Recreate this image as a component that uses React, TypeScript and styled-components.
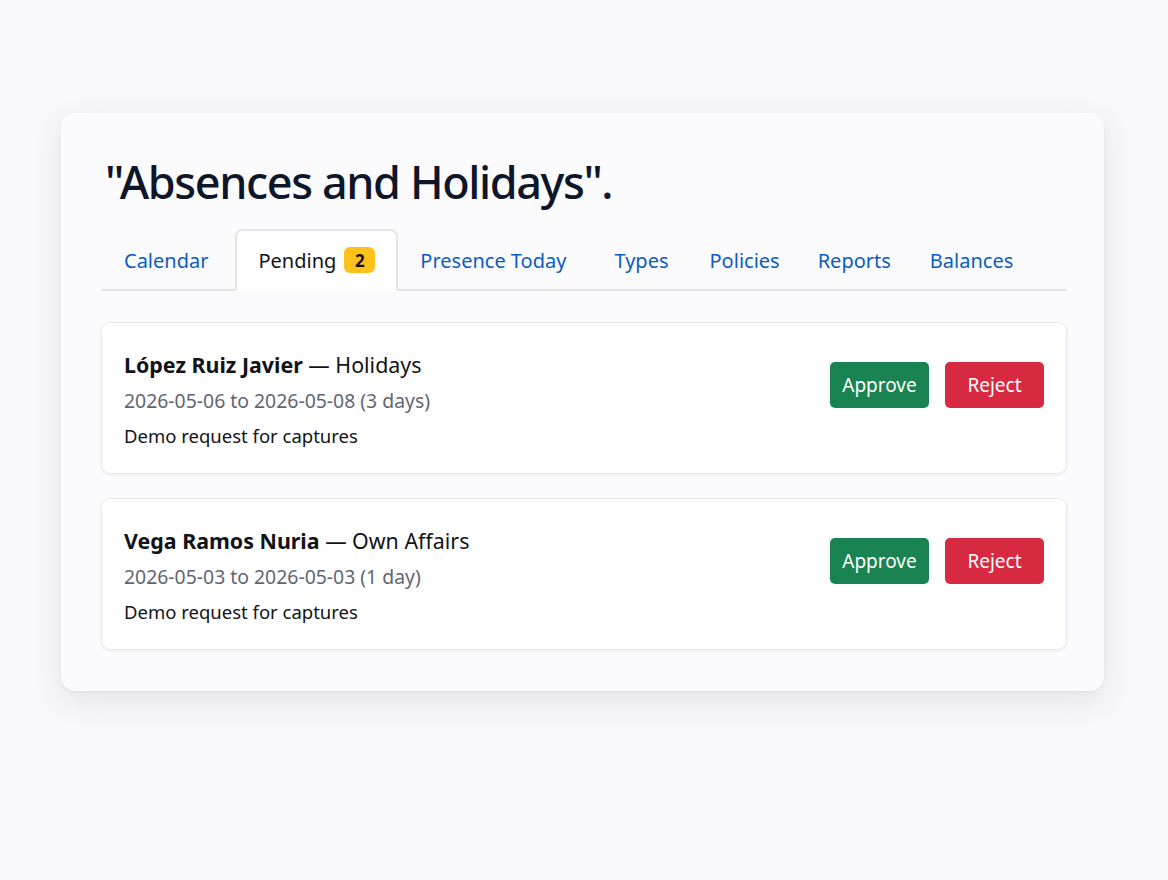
import styled, { createGlobalStyle } from "styled-components";

const GlobalStyle = createGlobalStyle`
  html, body {
    margin: 0;
    padding: 0;
    background: #f8f8fb;
  }
  body {
    font-family: "Noto Sans", "Open Sans", sans-serif;
    color: #111;
  }
`;

const colors = {
  title: "#0f1629",
  link: "#0b5cc2",
  text: "#111318",
  muted: "#5f6673",
  border: "#e3e5ea",
  success: "#198452",
  danger: "#d72a40",
  badge: "#fcc11a",
};

const Page = styled.div`
  width: 1168px;
  height: 880px;
  box-sizing: border-box;
  padding: 113px 64px 0 61px;
`;

const Panel = styled.section`
  width: 1043px;
  box-sizing: border-box;
  background: #fbfbfd;
  border-radius: 14px;
  box-shadow: 0 10px 30px rgba(20, 24, 40, 0.09), 0 1px 3px rgba(20, 24, 40, 0.05);
  padding: 38px 37px 41px 40px;
`;

const Title = styled.h1`
  margin: 0 0 16px 4px;
  font-size: 45px;
  line-height: 62px;
  font-weight: 500;
  color: ${colors.title};
  letter-spacing: -1.4px;
`;

const TabBar = styled.nav`
  display: flex;
  align-items: flex-end;
  border-bottom: 2px solid ${colors.border};
  margin-bottom: 31px;
`;

const Tab = styled.div<{ $active?: boolean; $gap: number }>`
  display: flex;
  flex-shrink: 0;
  align-items: center;
  gap: 8px;
  height: 62px;
  box-sizing: border-box;
  padding: 0 21px;
  margin-right: ${(p) => p.$gap}px;
  margin-bottom: -2px;
  font-size: 20px;
  white-space: nowrap;
  color: ${(p) => (p.$active ? colors.text : colors.link)};
  background: ${(p) => (p.$active ? "#ffffff" : "transparent")};
  border: 2px solid ${(p) => (p.$active ? colors.border : "transparent")};
  border-bottom-color: ${(p) => (p.$active ? "#ffffff" : "transparent")};
  border-radius: 8px 8px 0 0;
`;

const Badge = styled.span`
  display: inline-flex;
  align-items: center;
  justify-content: center;
  min-width: 31px;
  height: 26px;
  padding: 0 6px;
  box-sizing: border-box;
  border-radius: 6px;
  background: ${colors.badge};
  color: #111;
  font-size: 17px;
  font-weight: 700;
`;

const RequestList = styled.div`
  display: flex;
  flex-direction: column;
  gap: 24px;
`;

const RequestCard = styled.article`
  display: flex;
  align-items: flex-start;
  justify-content: space-between;
  background: #ffffff;
  border: 1px solid #e8e9ee;
  border-radius: 9px;
  box-shadow: 0 1px 3px rgba(20, 24, 40, 0.06);
  padding: 27px 22px 26px 22px;
  height: 152px;
  box-sizing: border-box;
`;

const Info = styled.div`
  display: flex;
  flex-direction: column;
  gap: 6px;
`;

const Heading = styled.div`
  font-size: 21.4px;
  line-height: 30px;
  color: ${colors.text};
  strong {
    font-weight: 700;
  }
`;

const Dates = styled.div`
  font-size: 19.4px;
  line-height: 29px;
  color: ${colors.muted};
`;

const Note = styled.div`
  font-size: 18.5px;
  line-height: 29px;
  color: ${colors.text};
`;

const Actions = styled.div`
  display: flex;
  gap: 16px;
  margin-top: 12px;
`;

const ActionButton = styled.button<{ $tone: "success" | "danger" }>`
  width: 99px;
  height: 46px;
  border: none;
  border-radius: 5px;
  background: ${(p) => (p.$tone === "success" ? colors.success : colors.danger)};
  color: #ffffff;
  font-family: inherit;
  font-size: 19px;
  cursor: pointer;
`;

const tabs = [
  { label: "Calendar", gap: 4 },
  { label: "Pending", active: true, badge: 2, gap: -1 },
  { label: "Presence Today", gap: 2 },
  { label: "Types", gap: -5 },
  { label: "Policies", gap: -8 },
  { label: "Reports", gap: -7 },
  { label: "Balances", gap: 0 },
];

const requests = [
  {
    name: "López Ruiz Javier",
    type: "Holidays",
    dates: "2026-05-06 to 2026-05-08 (3 days)",
    note: "Demo request for captures",
  },
  {
    name: "Vega Ramos Nuria",
    type: "Own Affairs",
    dates: "2026-05-03 to 2026-05-03 (1 day)",
    note: "Demo request for captures",
  },
];

export default function App() {
  return (
    <>
      <GlobalStyle />
      <Page>
        <Panel>
          <Title>"Absences and Holidays".</Title>
          <TabBar>
            {tabs.map((t) => (
              <Tab key={t.label} $active={t.active} $gap={t.gap}>
                {t.label}
                {t.badge !== undefined && <Badge>{t.badge}</Badge>}
              </Tab>
            ))}
          </TabBar>
          <RequestList>
            {requests.map((r) => (
              <RequestCard key={r.name}>
                <Info>
                  <Heading>
                    <strong>{r.name}</strong> — {r.type}
                  </Heading>
                  <Dates>{r.dates}</Dates>
                  <Note>{r.note}</Note>
                </Info>
                <Actions>
                  <ActionButton $tone="success">Approve</ActionButton>
                  <ActionButton $tone="danger">Reject</ActionButton>
                </Actions>
              </RequestCard>
            ))}
          </RequestList>
        </Panel>
      </Page>
    </>
  );
}
